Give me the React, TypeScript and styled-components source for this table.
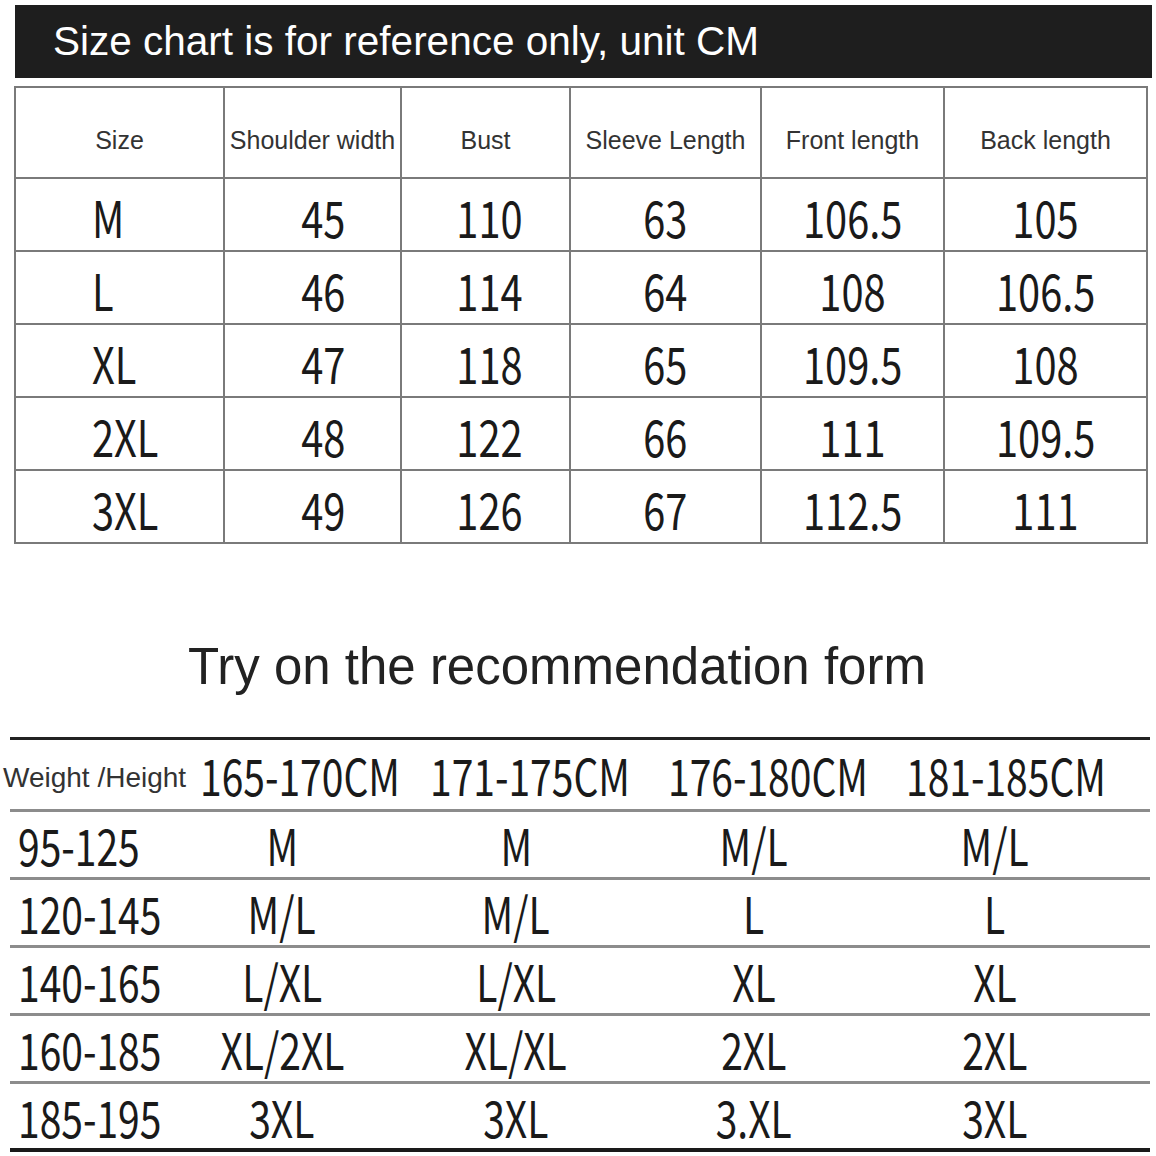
import React from 'react';
import styled, { createGlobalStyle } from 'styled-components';

const sizeHeaders = ['Size', 'Shoulder width', 'Bust', 'Sleeve Length', 'Front length', 'Back length'];

const sizeRows = [
  ['M', '45', '110', '63', '106.5', '105'],
  ['L', '46', '114', '64', '108', '106.5'],
  ['XL', '47', '118', '65', '109.5', '108'],
  ['2XL', '48', '122', '66', '111', '109.5'],
  ['3XL', '49', '126', '67', '112.5', '111'],
];

// the shoulder numbers sit a bit right of their column centre in the chart
const colShift = [0, 22, 8, 0, 0, 0];

const heights = ['165-170CM', '171-175CM', '176-180CM', '181-185CM'];

const fitRows = [
  ['95-125', 'M', 'M', 'M/L', 'M/L'],
  ['120-145', 'M/L', 'M/L', 'L', 'L'],
  ['140-165', 'L/XL', 'L/XL', 'XL', 'XL'],
  ['160-185', 'XL/2XL', 'XL/XL', '2XL', '2XL'],
  ['185-195', '3XL', '3XL', '3.XL', '3XL'],
];

export default function App() {
  return (
    <>
      <GlobalStyle />
      <Page>
        <Banner>Size chart is for reference only, unit CM</Banner>

        <SizeGrid>
          {sizeHeaders.map((h) => (
            <HeadCell key={h}>{h}</HeadCell>
          ))}
          {sizeRows.map((row) =>
            row.map((value, i) => (
              <DataCell key={row[0] + i} first={i === 0} shift={colShift[i]}>
                <Narrow>{value}</Narrow>
              </DataCell>
            )),
          )}
        </SizeGrid>

        <Title>Try on the recommendation form</Title>

        <FitTable>
          <FitRow head>
            <WeightLabel>Weight /Height</WeightLabel>
            {heights.map((h) => (
              <HeightCell key={h}>
                <Narrow>{h}</Narrow>
              </HeightCell>
            ))}
          </FitRow>
          {fitRows.map((row, r) => (
            <FitRow key={row[0]} last={r === fitRows.length - 1}>
              <WeightCell>
                <Narrow>{row[0]}</Narrow>
              </WeightCell>
              {row.slice(1).map((v, i) => (
                <FitCell key={i}>
                  <Narrow>{v}</Narrow>
                </FitCell>
              ))}
            </FitRow>
          ))}
        </FitTable>
      </Page>
    </>
  );
}

const GlobalStyle = createGlobalStyle`
  html, body {
    margin: 0;
    padding: 0;
    background: #ffffff;
  }
  body {
    font-family: "Liberation Sans", Arial, sans-serif;
    color: #111;
  }
`;

const Page = styled.div`
  width: 1156px;
  height: 1156px;
  overflow: hidden;
  background: #fff;
  display: flex;
  flex-direction: column;
  padding-top: 5px;
  box-sizing: border-box;
`;

const Banner = styled.div`
  margin-left: 15px;
  width: 1137px;
  height: 73px;
  background: #1e1e1e;
  color: #fff;
  font-size: 40.5px;
  line-height: 72px;
  padding-left: 38px;
  box-sizing: border-box;
  white-space: nowrap;
`;

const Narrow = styled.span`
  display: inline-block;
  font-family: "Noto Sans CJK SC", "Noto Sans", sans-serif;
  font-weight: 400;
  transform: scaleX(0.78);
  transform-origin: center;
  white-space: nowrap;
`;

const SizeGrid = styled.div`
  margin-top: 8px;
  margin-left: 14px;
  width: 1134px;
  display: grid;
  grid-template-columns: 207px 175px 167px 189px 181px 201px;
  grid-template-rows: 89px repeat(5, 71px);
  gap: 2px;
  padding: 2px;
  box-sizing: border-box;
  background: #7a7a7a;
`;

const HeadCell = styled.div`
  background: #fff;
  display: flex;
  align-items: center;
  justify-content: center;
  padding-top: 16px;
  box-sizing: border-box;
  font-size: 25px;
  color: #333;
  white-space: nowrap;
`;

const DataCell = styled.div<{ first?: boolean; shift?: number }>`
  background: #fff;
  display: flex;
  align-items: center;
  justify-content: ${(p) => (p.first ? 'flex-start' : 'center')};
  padding-left: ${(p) => (p.first ? 76 : p.shift || 0)}px;
  padding-top: 4px;
  box-sizing: border-box;
  font-size: 51px;
  line-height: 1;
  color: #1a1a1a;

  ${Narrow} {
    transform-origin: ${(p) => (p.first ? 'left center' : 'center')};
  }
`;

const Title = styled.div`
  margin-top: 97px;
  padding-left: 188px;
  font-size: 51px;
  line-height: 1;
  color: #222;
  white-space: nowrap;
`;

const FitTable = styled.div`
  margin-top: 45px;
  margin-left: 10px;
  width: 1140px;
  border-top: 3px solid #222;
  display: flex;
  flex-direction: column;
`;

const FitRow = styled.div<{ head?: boolean; last?: boolean }>`
  display: grid;
  grid-template-columns: 190px 230px 238px 238px 244px;
  align-items: center;
  height: ${(p) => (p.head ? '72px' : '68px')};
  padding-top: 4px;
  box-sizing: border-box;
  border-bottom: ${(p) => (p.last ? '4px solid #1a1a1a' : '3px solid #8c8c8c')};
  font-size: 50px;
  line-height: 1;
  color: #1a1a1a;
`;

const WeightLabel = styled.div`
  margin-left: -7px;
  font-family: "Liberation Sans", Arial, sans-serif;
  font-size: 28px;
  color: #333;
  white-space: nowrap;
  padding-top: 2px;
`;

const HeightCell = styled.div`
  ${Narrow} {
    transform-origin: left center;
  }
`;

const WeightCell = styled.div`
  padding-left: 8px;
  ${Narrow} {
    transform-origin: left center;
  }
`;

const FitCell = styled.div`
  text-align: center;
  padding-right: 66px;
`;
